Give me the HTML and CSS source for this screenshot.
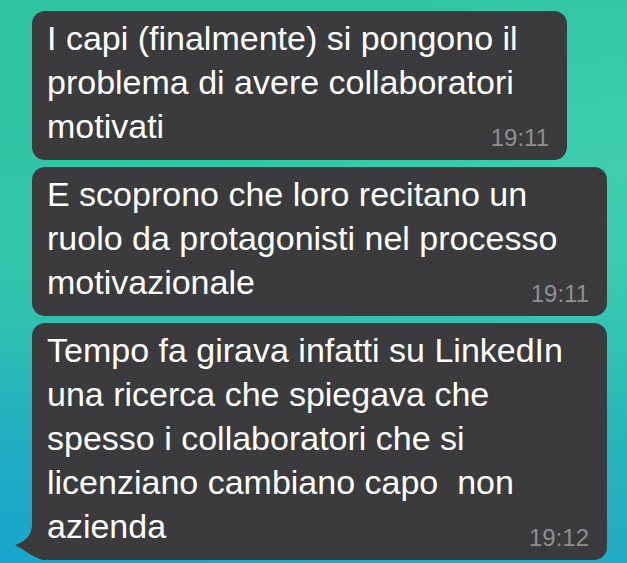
FILE: index.html
```html
<!DOCTYPE html>
<html lang="it">
<head>
    <meta charset="UTF-8">
    <meta name="viewport" content="width=device-width, initial-scale=1.0">
    <title>Chat</title>
    <link rel="stylesheet" href="styles.css">
</head>
<body>
    <div class="chat">
        <div class="bubble narrow">
            <p class="text">I capi (finalmente) si pongono il problema di avere collaboratori motivati</p>
            <span class="time">19:11</span>
        </div>
        <div class="bubble">
            <p class="text">E scoprono che loro recitano un ruolo da protagonisti nel processo motivazionale</p>
            <span class="time">19:11</span>
        </div>
        <div class="bubble last">
            <p class="text">Tempo fa girava infatti su LinkedIn una ricerca che spiegava che spesso i collaboratori che si licenziano cambiano capo&nbsp; non azienda</p>
            <span class="time">19:12</span>
            <svg class="tail" width="30" height="36" viewBox="0 0 30 36">
                <path d="M18 0 C18 10 13 17 1 21 C9 24 16 33 30 36 L30 0 Z" fill="#3b3b3d"/>
            </svg>
        </div>
    </div>
</body>
</html>
```

FILE: styles.css
```css
body {
    margin: 0;
    height: 563px;
    overflow: hidden;
    font-family: "Liberation Sans", Arial, sans-serif;
    background:
        radial-gradient(ellipse 75% 40% at 0% 100%, rgba(22, 165, 205, 0.9), rgba(22, 165, 205, 0) 100%),
        radial-gradient(ellipse 60% 45% at 100% 30%, rgba(72, 212, 182, 0.6), rgba(72, 212, 182, 0) 100%),
        linear-gradient(180deg, #2ec4a2 0%, #33c6aa 45%, #2ab8b8 72%, #23aac4 100%);
}
.chat {
    display: flex;
    flex-direction: column;
    align-items: flex-start;
    gap: 7px;
    padding: 11px 0 0 32px;
}
.bubble {
    position: relative;
    box-sizing: border-box;
    max-width: 575px;
    background: #3b3b3d;
    border-radius: 13px;
    padding: 5px 42px 10px 15px;
}
.bubble.narrow {
    max-width: 535px;
}
.text {
    margin: 0;
    color: #ffffff;
    font-size: 34px;
    line-height: 44px;
}
.time {
    display: block;
    width: 62px;
    margin: -22px -24px 0 auto;
    text-align: right;
    color: #8e8e92;
    font-size: 24px;
    line-height: 24px;
}
.tail {
    position: absolute;
    left: -18px;
    bottom: 0;
    display: block;
}
```
